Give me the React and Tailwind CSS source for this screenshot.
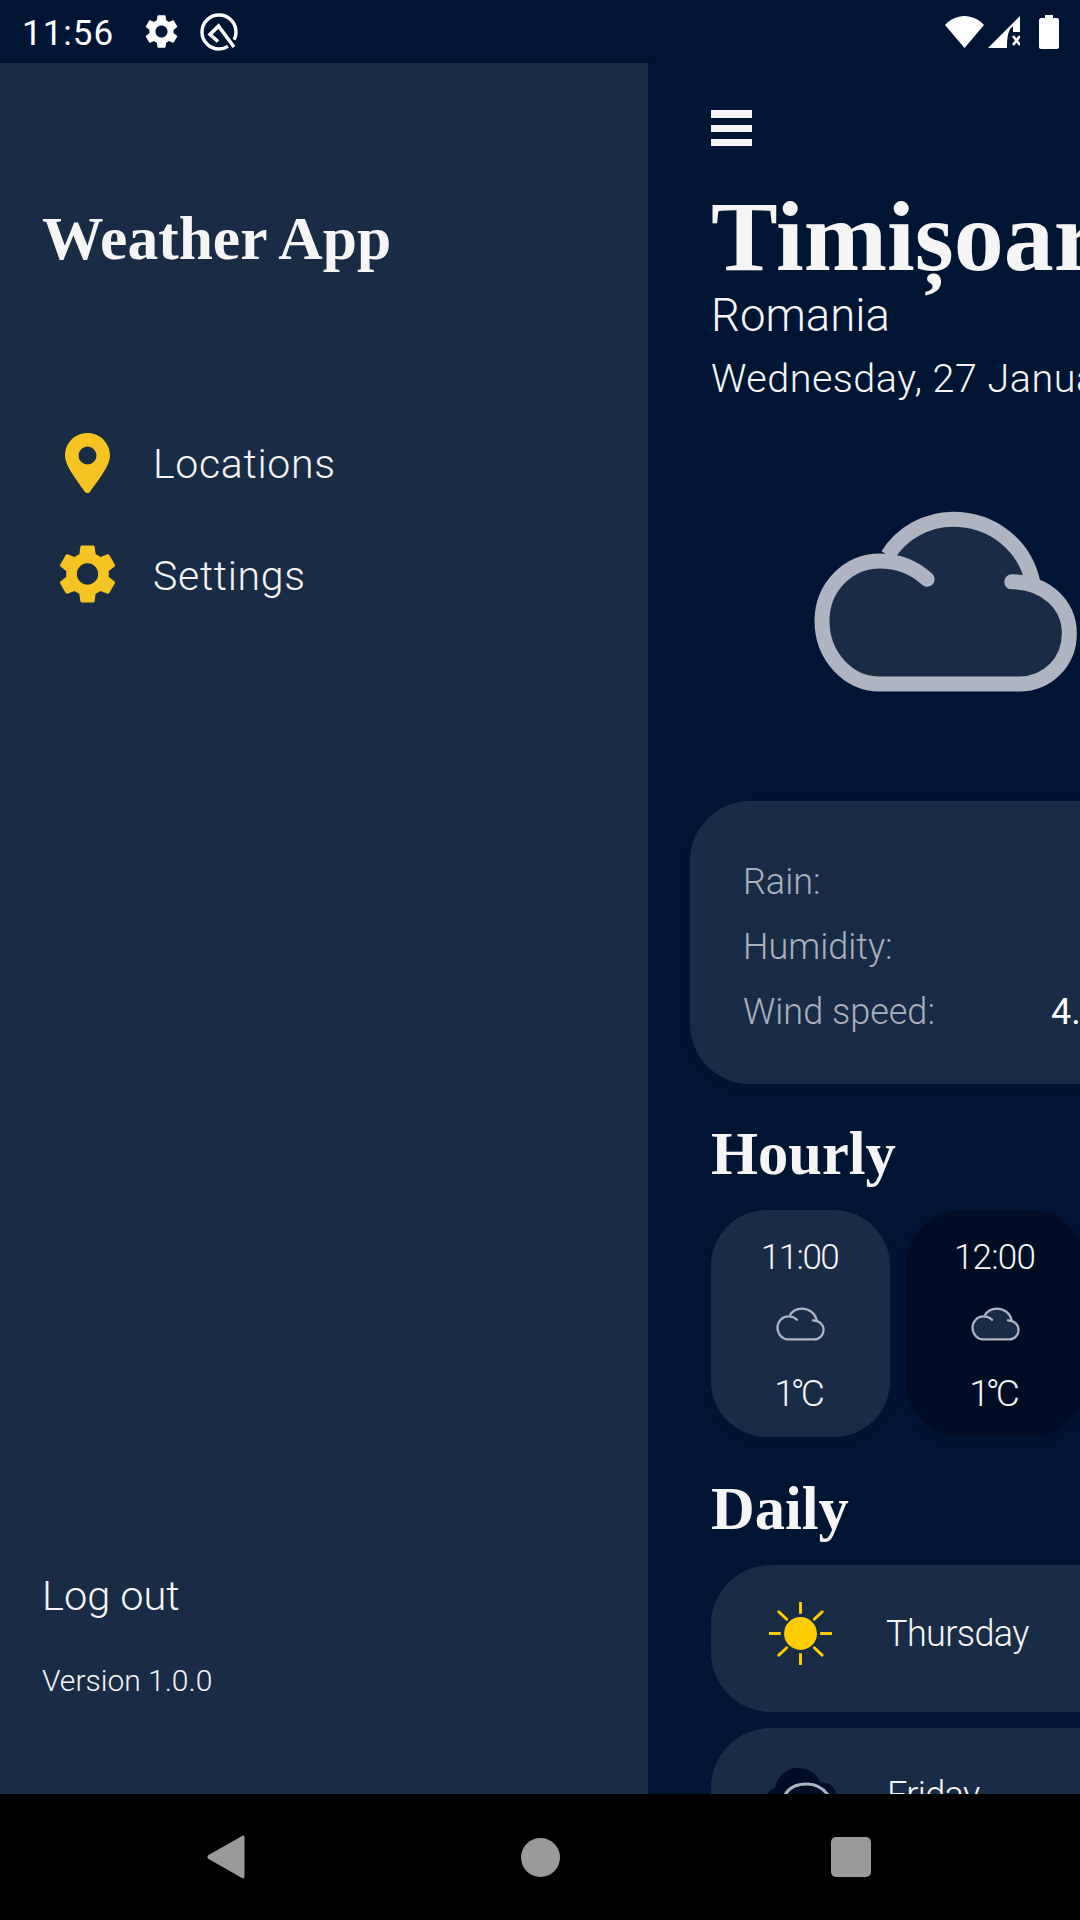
const GEAR = "M19.14,12.94c0.04-0.3,0.06-0.61,0.06-0.94c0-0.32-0.02-0.64-0.07-0.94l2.03-1.58c0.18-0.14,0.23-0.41,0.12-0.61 l-1.92-3.32c-0.12-0.22-0.37-0.29-0.59-0.22l-2.39,0.96c-0.5-0.38-1.03-0.7-1.62-0.94L14.4,2.81c-0.04-0.24-0.24-0.41-0.48-0.41 h-3.84c-0.24,0-0.43,0.17-0.47,0.41L9.25,5.35C8.66,5.59,8.12,5.92,7.63,6.29L5.24,5.33c-0.22-0.08-0.47,0-0.59,0.22L2.74,8.87 C2.62,9.08,2.66,9.34,2.86,9.48l2.03,1.58C4.84,11.36,4.8,11.69,4.8,12s0.02,0.64,0.07,0.94l-2.03,1.58 c-0.18,0.14-0.23,0.41-0.12,0.61l1.92,3.32c0.12,0.22,0.37,0.29,0.59,0.22l2.39-0.96c0.5,0.38,1.03,0.7,1.62,0.94l0.36,2.54 c0.05,0.24,0.24,0.41,0.48,0.41h3.84c0.24,0,0.44-0.17,0.47-0.41l0.36-2.54c0.59-0.24,1.13-0.56,1.62-0.94l2.39,0.96 c0.22,0.08,0.47,0,0.59-0.22l1.92-3.32c0.12-0.22,0.07-0.47-0.12-0.61L19.14,12.94z M12,15.6c-1.98,0-3.6-1.62-3.6-3.6 s1.62-3.6,3.6-3.6s3.6,1.62,3.6,3.6S13.98,15.6,12,15.6z";

const serif = "font-['Liberation_Serif',serif]";
const sans = "font-['Roboto',sans-serif]";

function Gear({ className, fill }) {
  return (
    <svg viewBox="2.4 2.2 19.2 19.6" className={className}>
      <path d={GEAR} fill={fill} />
    </svg>
  );
}

function Cloud({ className, sw = 45, fill = "#192c46", stroke = "#aeb5c0" }) {
  return (
    <svg viewBox="103 63 790 542" className={className}>
      <path
        d="M127 392C127 292 205 212 300 212L325 195C365 130 440 87 520 87C640 87 735 165 760 275C830 300 870 360 870 430C870 515 805 582 720 582L300 582C205 582 127 497 127 392Z"
        fill={fill}
      />
      <g fill="none" stroke={stroke} strokeWidth={sw} strokeLinecap="round">
        <path d="M325 195C365 130 440 87 520 87C640 87 735 165 760 275" strokeLinecap="butt" />
        <path d="M443 267C405 232 355 212 300 212C205 212 127 292 127 392C127 497 205 582 300 582L720 582C805 582 870 515 870 430C870 345 800 275 697 275" />
      </g>
    </svg>
  );
}

function Sun({ className }) {
  return (
    <svg viewBox="0 0 64 64" className={className}>
      <circle cx="32" cy="32" r="16.7" fill="#ffcc00" />
      <g stroke="#ffcc00" strokeWidth="3" strokeLinecap="butt">
        <path d="M32 0V12M32 52V64M0 32H12M52 32H64" />
        <path d="M10 10L18 17.5M54 10L46 17.5M10 54L18 46.5M54 54L46 46.5" strokeLinecap="round" />
      </g>
    </svg>
  );
}

function StatusBar() {
  return (
    <div className="h-[63px] shrink-0 flex items-center bg-[#001534] text-white">
      <span className={`${sans} ml-[22px] pt-[3px] w-[90px] text-[35px] leading-none tracking-[1px]`}>11:56</span>
      <Gear className="ml-[33px] w-[33px] h-[33px]" fill="#ffffff" />
      <svg viewBox="0 0 38 38" className="ml-[22px] w-[38px] h-[38px]">
        <circle cx="19" cy="19" r="17" fill="none" stroke="#fff" strokeWidth="3.4" strokeDasharray="98 9" strokeDashoffset="-17" />
        <path d="M34 34L18.500 13L10 21.500L18 28.500" fill="none" stroke="#fff" strokeWidth="3.6" />
      </svg>
      <div className="ml-auto mr-[21px] flex items-center">
        <svg viewBox="0 0 39 32" className="w-[39px] h-[32px]">
          <path d="M19.500 32L0 9C5 3.500 12 0 19.500 0C27 0 34 3.500 39 9Z" fill="#fff" />
        </svg>
        <svg viewBox="0 0 32 32" className="ml-[4px] w-[32px] h-[32px]">
          <path d="M32 0V16H25V10C20 14 19 21 19 32H0Z" fill="#fff" />
          <path d="M25 20L32 29M32 20L25 29" stroke="#fff" strokeWidth="2.600" />
        </svg>
        <svg viewBox="0 0 20 34" className="ml-[19px] w-[20px] h-[34px]">
          <path d="M6 0H14V3H18C19 3 20 4 20 5V32C20 33 19 34 18 34H2C1 34 0 33 0 32V5C0 4 1 3 2 3H6Z" fill="#fff" />
        </svg>
      </div>
    </div>
  );
}

function Sidebar() {
  return (
    <aside className="w-[648px] shrink-0 h-full bg-[#192c46] flex flex-col text-[#f5f5f5] pl-[43px] shadow-[0_0_12px_rgba(0,0,0,0.2)]">
      <h1 className={`${serif} font-bold text-[61.500px] leading-[70px] mt-[140px] -ml-[1px]`}>Weather App</h1>
      <nav className={`${sans} font-light flex flex-col mt-[136px]`}>
        <div className="flex items-center h-[112px]">
          <svg viewBox="0 0 45 60" className="ml-[22px] mb-[4px] w-[45px] h-[60px]">
            <path d="M22.500 0C10 0 0 10 0 22.500C0 34 15 51 20 59C21 60.500 24 60.500 25 59C30 51 45 34 45 22.500C45 10 35 0 22.500 0ZM22.500 31.500A9 9 0 1 1 22.500 13.500A9 9 0 1 1 22.500 31.500Z" fill="#f5c322" fillRule="evenodd" />
          </svg>
          <span className="ml-[43px] text-[41px] tracking-[0.7px]">Locations</span>
        </div>
        <div className="flex items-center h-[112px]">
          <Gear className="ml-[16px] mb-[6px] w-[57px] h-[58px]" fill="#f5c322" />
          <span className="ml-[37px] text-[41px] tracking-[0.7px]">Settings</span>
        </div>
      </nav>
      <div className={`${sans} font-light mt-auto mb-[95px] -ml-[1px]`}>
        <div className="text-[41.500px] leading-[50px]">Log out</div>
        <div className="text-[30px] leading-[36px] mt-[42px]">Version 1.0.0</div>
      </div>
    </aside>
  );
}

function Hour({ time, card, cloudFill, track }) {
  return (
    <div className={`w-[179px] h-[227px] shrink-0 rounded-[56px] ${card} flex flex-col items-center shadow-[0_4px_14px_rgba(0,0,0,0.12)]`}>
      <span className={`text-[35px] ${track} leading-[40px] mt-[28px] pr-[2px]`}>{time}</span>
      <Cloud className="w-[49px] h-[34px] mt-[29px]" sw={36} fill={cloudFill} />
      <span className="text-[37px] tracking-[-4px] leading-[44px] mt-[31px] pr-[6px]">1°C</span>
    </div>
  );
}

function Main() {
  return (
    <main className={`${sans} flex-1 min-w-0 h-full overflow-hidden bg-[#001534] text-[#f5f5f5] font-light`}>
      <div className="w-[700px] pl-[63px]">
        <div className="pt-[47px] flex flex-col gap-[7px] w-[41px]">
          <div className="h-[8px] bg-[#f5f5f5]" />
          <div className="h-[7px] bg-[#f5f5f5]" />
          <div className="h-[7px] bg-[#f5f5f5]" />
        </div>
        <h2 className={`${serif} font-bold text-[100px] leading-[100px] mt-[41px] whitespace-nowrap`}>Timișoara</h2>
        <div className="text-[45.500px] leading-[50px] mt-[4px] whitespace-nowrap">Romania</div>
        <div className="text-[39.500px] tracking-[0.5px] leading-[46px] mt-[15px] whitespace-nowrap">Wednesday, 27 January</div>
        <Cloud className="w-[263px] h-[181px] ml-[103px] mt-[109px]" />
        <div className="-ml-[21px] mt-[109px] h-[283px] w-[600px] rounded-[60px] bg-[#192c46] pl-[53px] pt-[48px] text-[36px] shadow-[0_4px_14px_rgba(0,0,0,0.12)]">
          {[["Rain:", ""], ["Humidity:", ""], ["Wind speed:", "4.1 km/h"]].map(([k, v]) => (
            <div key={k} className="flex h-[65px] items-center">
              <span className="w-[308px] text-[#a9b0ba]">{k}</span>
              <span className="font-normal text-[#ffffff]">{v}</span>
            </div>
          ))}
        </div>
        <h3 className={`${serif} font-bold text-[60.500px] leading-[64px] mt-[38px]`}>Hourly</h3>
        <div className="flex gap-[16px] mt-[24px]">
          <Hour time="11:00" track="tracking-[-1.500px]" card="bg-[#192c46]" cloudFill="#192c46" />
          <Hour time="12:00" track="tracking-[-0.800px]" card="bg-[#000d24]" cloudFill="#192c46" />
        </div>
        <h3 className={`${serif} font-bold text-[60.500px] leading-[64px] mt-[40px]`}>Daily</h3>
        <div className="mt-[24px] h-[147px] rounded-[60px] bg-[#192c46] flex items-center pl-[58px] pb-[10px]">
          <Sun className="w-[63px] h-[63px]" />
          <span className="ml-[54px] text-[36px] tracking-[-0.600px]">Thursday</span>
        </div>
        <div className="mt-[16px] h-[147px] rounded-[60px] bg-[#192c46] flex pl-[54px]">
          <svg viewBox="0 0 72 60" className="w-[72px] h-[60px] mt-[40px]">
            <path d="M0 30C3 24 8 20 10 20C12 8 22 0 32 0C44 0 52 6 56 15C64 13 72 20 72 30V60H0Z" fill="#000d24" />
            <path d="M20 27C24 19 33 16 42 16C51 16 58 20 63 27M20 27V60M63 27V60" fill="none" stroke="#aeb5c0" strokeWidth="3" />
          </svg>
          <span className="ml-[50px] mt-[45px] text-[36px] leading-[44px] tracking-[-0.600px]">Friday</span>
        </div>
      </div>
    </main>
  );
}

function NavBar() {
  return (
    <div className="h-[126px] shrink-0 bg-black flex items-center">
      <svg viewBox="0 0 38 44" className="ml-[207px] w-[38px] h-[44px]">
        <path d="M35 1L1.500 20C0 21 0 23 1.500 24L35 43C36.500 44 37.500 43 37.500 41.500V2.500C37.500 1 36.500 0 35 1Z" fill="#9a9a9a" />
      </svg>
      <div className="ml-[276px] w-[39px] h-[39px] rounded-full bg-[#9a9a9a]" />
      <div className="ml-[271px] w-[40px] h-[40px] rounded-[5px] bg-[#9a9a9a]" />
    </div>
  );
}

export default function App() {
  return (
    <div className="w-[1080px] h-[1920px] flex flex-col overflow-hidden bg-black">
      <StatusBar />
      <div className="flex-1 min-h-0 flex">
        <Sidebar />
        <Main />
      </div>
      <NavBar />
    </div>
  );
}
